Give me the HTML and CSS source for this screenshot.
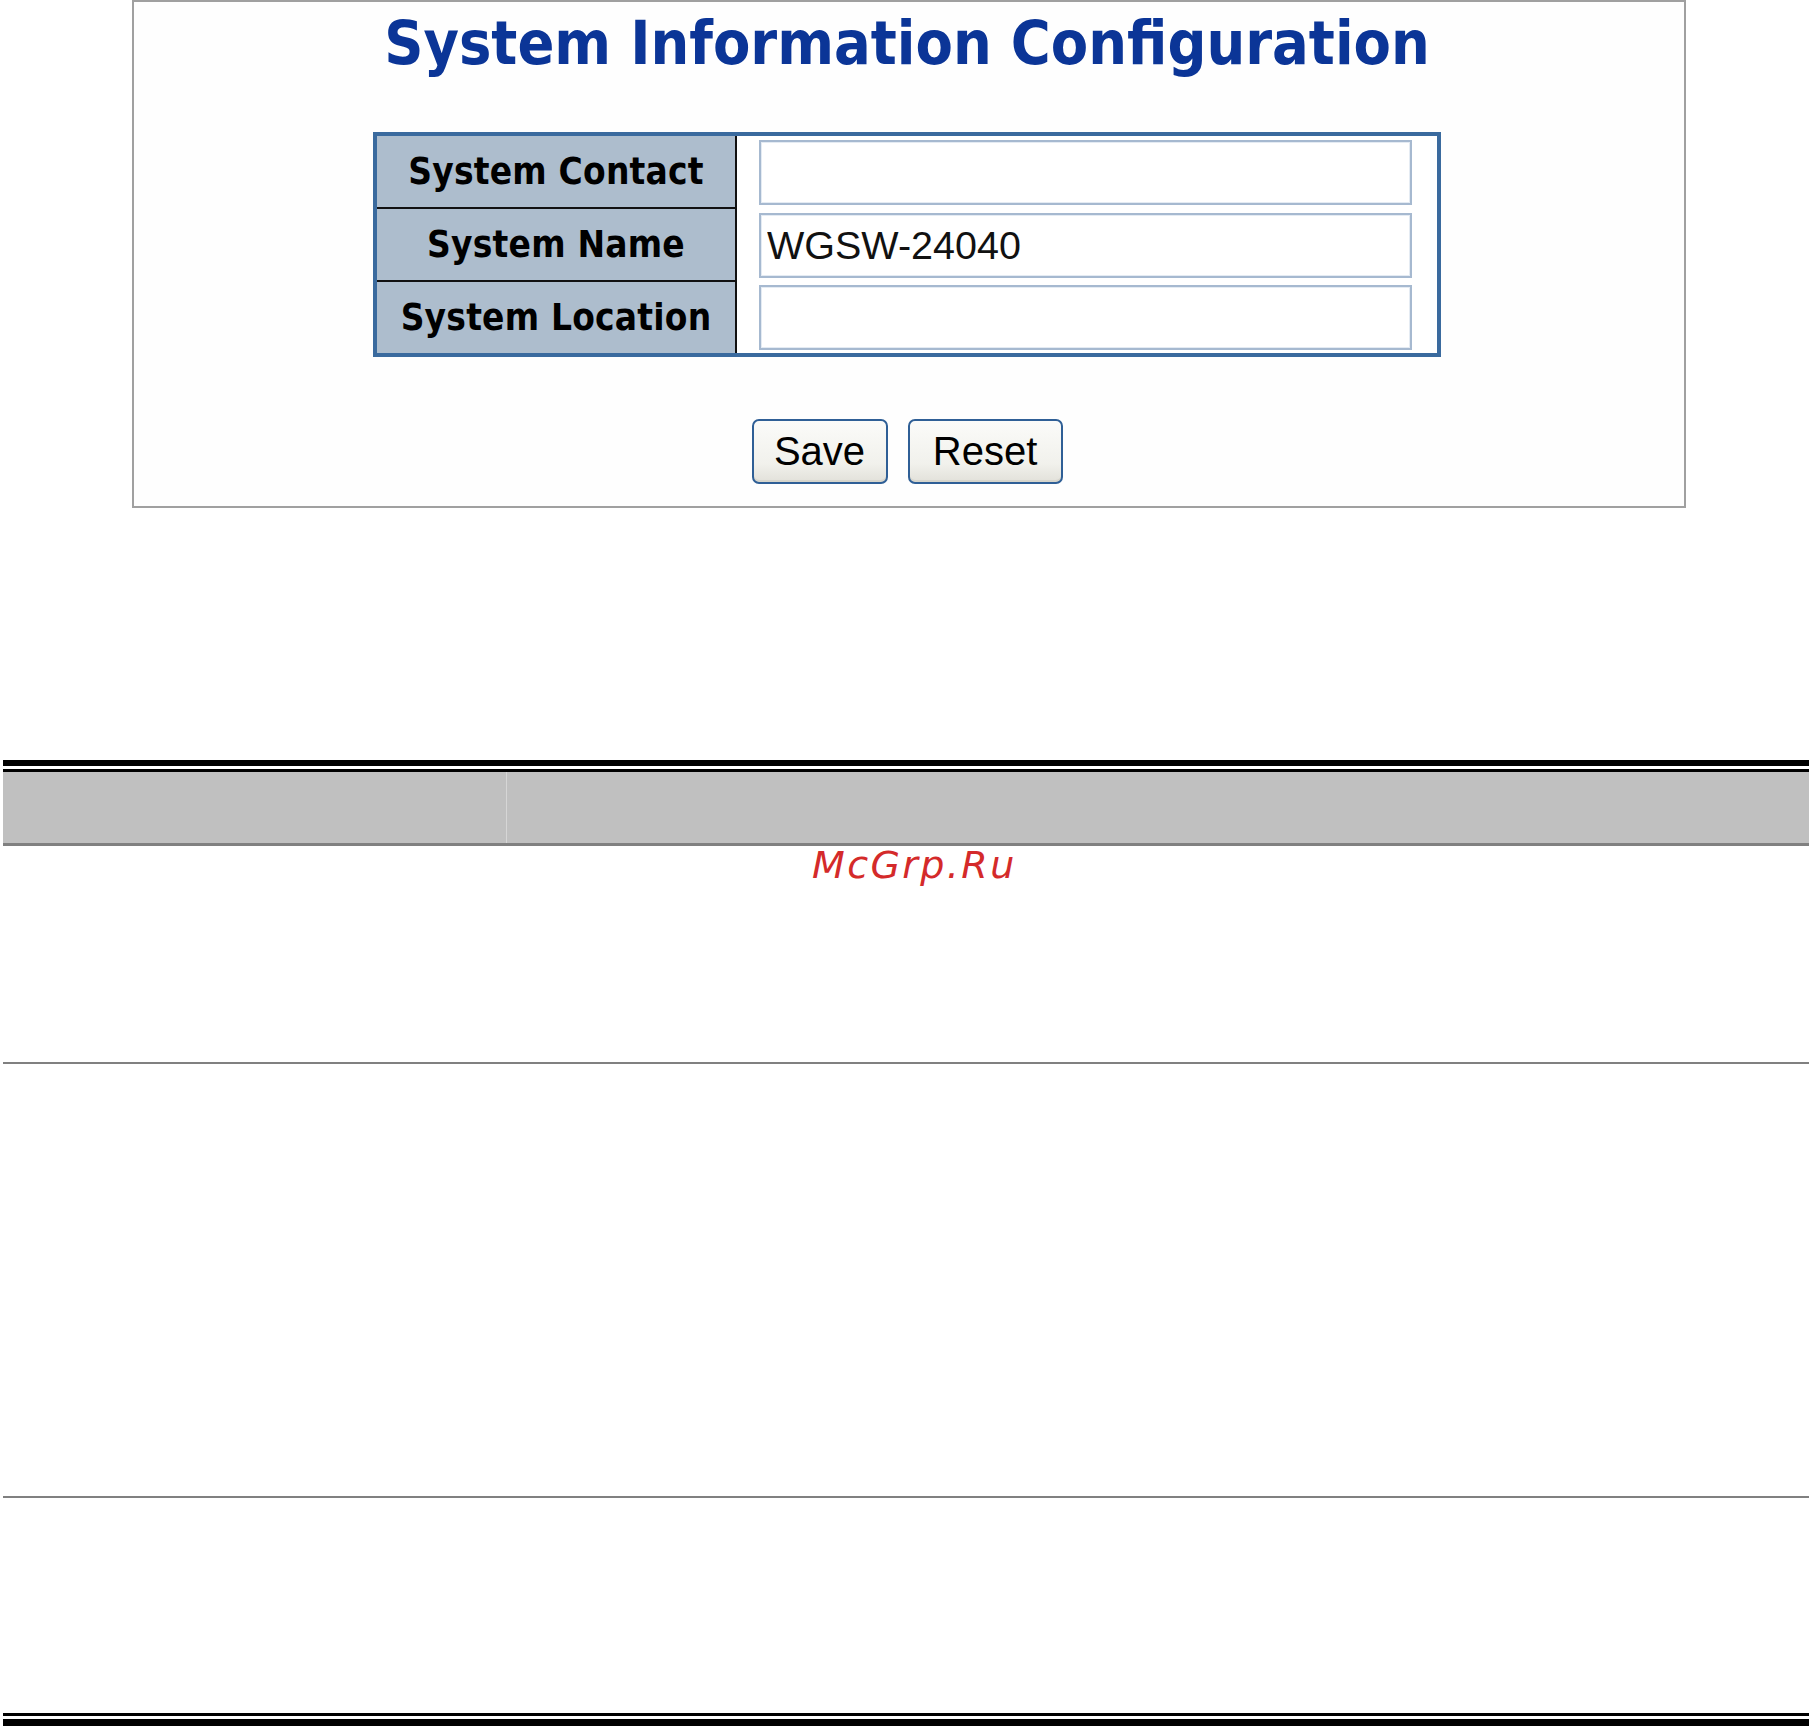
FILE: index.html
```html
<!DOCTYPE html>
<html>
<head>
<meta charset="utf-8">
<title>System Information Configuration</title>
<link rel="stylesheet" href="styles.css">
</head>
<body>
<div class="frame">
  <h1 class="title"><span class="stretch">System Information Configuration</span></h1>
  <div class="config">
    <div class="label"><span class="stretch">System Contact</span></div>
    <div class="cell"><input class="field" type="text" value=""></div>
    <div class="label"><span class="stretch">System Name</span></div>
    <div class="cell"><input class="field" type="text" value="WGSW-24040"></div>
    <div class="label last"><span class="stretch">System Location</span></div>
    <div class="cell last"><input class="field" type="text" value=""></div>
  </div>
  <div class="buttons">
    <button class="btn btn-save" type="button">Save</button>
    <button class="btn btn-reset" type="button">Reset</button>
  </div>
</div>

<div class="doc">
  <div class="rule-thick"></div>
  <div class="rule-thin"></div>
  <div class="doc-head">
    <div class="head-cell first"></div>
    <div class="head-cell"></div>
  </div>
  <div class="doc-row row-a"></div>
  <div class="doc-row row-b"></div>
  <div class="doc-row row-c"></div>
  <div class="rule-thin bottom"></div>
  <div class="rule-thick bottom"></div>
</div>

<div class="watermark">McGrp.Ru</div>
</body>
</html>
```

FILE: styles.css
```css
html, body {
  margin: 0;
  padding: 0;
  background: #ffffff;
}

body {
  position: relative;
  width: 1812px;
  font-family: "DejaVu Sans", Verdana, sans-serif;
}

.frame {
  box-sizing: border-box;
  margin-left: 132px;
  width: 1554px;
  height: 508px;
  border: 2px solid #a0a0a0;
  padding-top: 14px;
  padding-right: 4px;
  background: #fefefe;
}

.stretch {
  display: inline-block;
  transform: scaleY(1.12);
  transform-origin: center;
}

.title {
  margin: 0;
  font-family: "DejaVu Sans", Verdana, sans-serif;
  font-weight: bold;
  font-size: 54.5px;
  line-height: 54px;
  color: #0b3597;
  text-align: center;
}

.config {
  display: grid;
  grid-template-columns: 360px 698px;
  width: 1060px;
  margin: 62px auto 0;
  border: 4px solid #3a6a9e;
  background: #ffffff;
}

.label {
  box-sizing: border-box;
  height: 73px;
  border-right: 2px solid #111111;
  border-bottom: 2px solid #111111;
  background: #adbdcd;
  display: flex;
  align-items: center;
  justify-content: center;
  font-weight: bold;
  font-size: 33px;
  letter-spacing: 0.2px;
  color: #000000;
}

.label.last {
  height: 71px;
  border-bottom: none;
}

.cell {
  display: flex;
  align-items: center;
  padding-left: 22px;
  background: #ffffff;
}

.field {
  box-sizing: border-box;
  width: 653px;
  height: 65px;
  margin: 0;
  padding: 0 0 0 6px;
  border: 2px solid #a6b9d0;
  box-shadow: inset 0 0 0 1px #e4ebf3;
  background: #ffffff;
  font-family: "Liberation Sans", Arial, sans-serif;
  font-size: 39.5px;
  color: #111111;
  outline: none;
}

.buttons {
  display: flex;
  justify-content: center;
  gap: 20px;
  margin-top: 62px;
}

.btn {
  box-sizing: border-box;
  height: 65px;
  margin: 0;
  padding: 0;
  border: 2px solid #2f5f96;
  border-radius: 7px;
  background: linear-gradient(#fbfbf9, #f1f1ec 70%, #e2e1da);
  font-family: "Liberation Sans", Arial, sans-serif;
  font-size: 40px;
  color: #000000;
  box-shadow: inset 0 -2px 0 #d6d5cc;
}

.btn-save { width: 136px; }
.btn-reset { width: 155px; }

.doc {
  margin: 252px 3px 0;
}

.rule-thick {
  height: 6px;
  background: #000000;
}

.rule-thin {
  height: 3px;
  margin-top: 3px;
  background: #000000;
}

.rule-thin.bottom {
  height: 3px;
  margin-top: 0;
}

.rule-thick.bottom {
  height: 8px;
  margin-top: 3px;
}

.doc-head {
  display: grid;
  grid-template-columns: 504px 1fr;
  height: 71px;
  background: #c0c0c0;
  border-bottom: 3px solid #808080;
}

.head-cell.first {
  border-right: 1px solid #d6d6d6;
}

.doc-row {
  box-sizing: border-box;
  border-bottom: 2px solid #808080;
}

.row-a { height: 218px; }
.row-b { height: 434px; }
.row-c { height: 215px; border-bottom: none; }

.watermark {
  position: absolute;
  left: 812px;
  top: 846px;
  font-family: "DejaVu Sans", sans-serif;
  font-style: italic;
  font-size: 38px;
  line-height: 38px;
  letter-spacing: 2.4px;
  color: #d42a2a;
}
```
